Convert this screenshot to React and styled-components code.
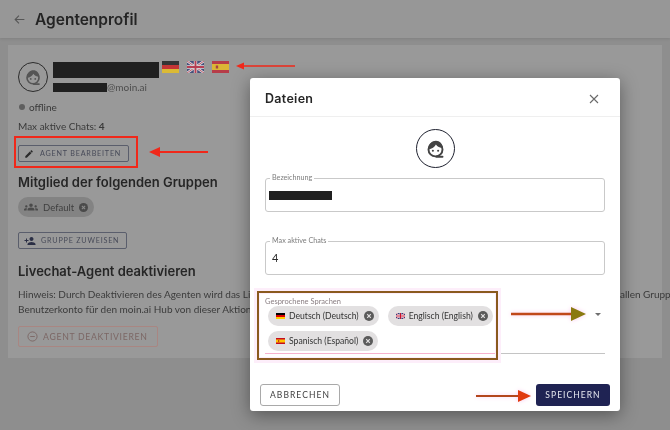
import React from 'react';
import styled, { createGlobalStyle } from 'styled-components';

const GlobalStyle = createGlobalStyle`
  html, body {
    margin: 0;
    padding: 0;
    background: #8e8e8e;
  }
  * {
    box-sizing: border-box;
  }
`;

const headingFont = `Inter, "Open Sans", sans-serif`;
const bodyFont = `Lato, "Open Sans", sans-serif`;

const Page = styled.div`
  position: relative;
  width: 670px;
  height: 430px;
  overflow: hidden;
  background: #8e8e8e;
  font-family: ${bodyFont};
  color: #2a2a2a;
  filter: blur(0.3px);
`;

const Header = styled.header`
  display: flex;
  align-items: center;
  gap: 9px;
  height: 38px;
  padding-left: 13px;
  background: #979797;
  box-shadow: 0 1px 3px rgba(0, 0, 0, 0.1);
`;

const BackIcon = styled.svg`
  width: 13px;
  height: 13px;
  color: #565656;
`;

const PageTitle = styled.h1`
  margin: 0;
  font-family: ${headingFont};
  font-size: 15.5px;
  font-weight: 600;
  color: #242424;
`;

const Card = styled.section`
  margin: 7px 8px 0;
  height: 313px;
  padding: 17px 10px 0;
  background: #999;
`;

const ProfileRow = styled.div`
  display: flex;
  gap: 5px;
`;

const AvatarCircle = styled.div`
  display: flex;
  align-items: center;
  justify-content: center;
  flex: none;
  width: ${(p) => p.$size}px;
  height: ${(p) => p.$size}px;
  border: 1.2px solid ${(p) => p.$line};
  border-radius: 50%;
`;

const Identity = styled.div`
  display: flex;
  flex-direction: column;
`;

const NameRow = styled.div`
  display: flex;
  gap: 3px;
`;

const Redacted = styled.div`
  width: ${(p) => p.$w}px;
  height: ${(p) => p.$h}px;
  background: #202020;
`;

const FlagBox = styled.svg`
  display: block;
  width: ${(p) => p.$w}px;
  height: ${(p) => p.$h}px;
  opacity: ${(p) => p.$fade || 0.65};
`;

const FlagList = styled.div`
  display: flex;
  gap: 8px;
  margin-top: -1px;
`;

const EmailRow = styled.div`
  display: flex;
  align-items: center;
  height: 10px;
  margin-top: 4px;
  font-size: 10px;
  color: #4d4d4d;
`;

const StatusRow = styled.div`
  display: flex;
  align-items: center;
  gap: 4px;
  margin: 8px 0 0 1px;
  font-size: 10px;
  line-height: 14px;
  color: #3a3a3a;
`;

const StatusDot = styled.span`
  width: 6px;
  height: 6px;
  border-radius: 50%;
  background: #5f5f5f;
`;

const ChatsLine = styled.p`
  margin: 5px 0 0;
  font-size: 10px;
  line-height: 14px;
  color: #3a3a3a;
  b {
    font-weight: 700;
  }
`;

const OutlineButton = styled.button`
  display: flex;
  align-items: center;
  gap: ${(p) => p.$gap || 6}px;
  width: ${(p) => p.$w}px;
  height: 17px;
  margin-top: ${(p) => p.$top}px;
  padding: 0 0 0 5px;
  background: transparent;
  border: 1px solid #5a5e6c;
  border-radius: 2px;
  font-family: ${bodyFont};
  font-size: 7.2px;
  letter-spacing: 0.8px;
  color: #474a58;
  white-space: nowrap;
`;

const SectionHeading = styled.h2`
  margin: ${(p) => p.$top}px 0 0;
  font-family: ${headingFont};
  font-size: 13px;
  line-height: 18px;
  font-weight: 600;
  color: #262626;
  white-space: nowrap;
`;

const GroupChip = styled.div`
  display: flex;
  align-items: center;
  gap: 5px;
  width: 76px;
  height: 20px;
  margin-top: 6px;
  padding-left: 6px;
  border-radius: 10px;
  background: #838383;
  font-size: 9.5px;
  color: #3f3f3f;
`;

const Hint = styled.p`
  margin: 7px 0 0;
  font-size: 10px;
  line-height: 14.5px;
  color: #3b3b3b;
  white-space: nowrap;
`;

const DangerButton = styled.button`
  display: flex;
  align-items: center;
  gap: 5px;
  width: 140px;
  height: 21px;
  margin-top: 10px;
  padding: 0 0 0 8px;
  background: transparent;
  border: 1px solid #a98682;
  border-radius: 2px;
  font-family: ${bodyFont};
  font-size: 8.7px;
  letter-spacing: 0.7px;
  color: #7c6765;
  white-space: nowrap;
`;

const Backdrop = styled.div`
  position: absolute;
  left: 250px;
  top: 78px;
`;

const Modal = styled.div`
  display: flex;
  flex-direction: column;
  width: 370px;
  height: 333px;
  background: #fff;
  border-radius: 3px;
  box-shadow: 0 4px 18px rgba(0, 0, 0, 0.4);
`;

const ModalHead = styled.div`
  display: flex;
  align-items: center;
  justify-content: space-between;
  height: 39px;
  padding: 3px 20px 0 15px;
  border-bottom: 1px solid #efefef;
`;

const ModalTitle = styled.h2`
  margin: 0;
  font-family: ${headingFont};
  font-size: 12.5px;
  font-weight: 600;
  letter-spacing: 0.3px;
  color: #262626;
`;

const CloseIcon = styled.svg`
  width: 12px;
  height: 12px;
  color: #6a6a6a;
`;

const ModalBody = styled.div`
  display: flex;
  flex-direction: column;
  flex: 1;
  padding: 12px 15px 0;
`;

const AvatarSlot = styled.div`
  display: flex;
  justify-content: center;
`;

const Field = styled.fieldset`
  display: flex;
  align-items: flex-start;
  height: 38px;
  margin: ${(p) => p.$top}px 0 0;
  padding: 0 6px;
  border: 1px solid #c9c9c9;
  border-radius: 3px;
  min-width: 0;
`;

const FieldLegend = styled.legend`
  padding: 0 2px;
  margin-left: -2px;
  font-size: 7.2px;
  line-height: 8px;
  color: #7d7d7d;
`;

const FieldValue = styled.span`
  margin-top: 6px;
  font-size: 11px;
  color: #2a2a2a;
`;

const FieldBar = styled(Redacted)`
  margin: 9px 0 0 -3px;
`;

const SelectField = styled.div`
  position: relative;
  height: 57px;
  margin-top: 22px;
  border-bottom: 1px solid;
  border-image: linear-gradient(90deg, #f7b2cf 68%, #c4c4c4 68%) 1;
`;

const SelectLabel = styled.div`
  font-size: 7.5px;
  line-height: 9px;
  color: #8a7f83;
`;

const ChipWrap = styled.div`
  display: flex;
  flex-wrap: wrap;
  gap: 5px 9px;
  margin: 0 0 0 3px;
  width: 240px;
`;

const LangChip = styled.div`
  display: flex;
  align-items: center;
  height: 20px;
  padding: 0 5px 0 8px;
  gap: 4px;
  border-radius: 10px;
  background: #e2e0e1;
  font-size: 8.6px;
  color: #333;
  white-space: nowrap;
`;

const ChipText = styled.span`
  margin-right: 1px;
`;

const DropCaret = styled.span`
  position: absolute;
  right: 4px;
  top: 16px;
  width: 0;
  height: 0;
  border-left: 3px solid transparent;
  border-right: 3px solid transparent;
  border-top: 3px solid #6f6f6f;
`;

const ModalFoot = styled.div`
  display: flex;
  align-items: center;
  justify-content: space-between;
  margin-top: auto;
  padding: 0 10px 5px;
`;

const CancelButton = styled.button`
  width: 80px;
  height: 22px;
  background: #fff;
  border: 1px solid #a9a9a9;
  border-radius: 3px;
  font-family: ${bodyFont};
  font-size: 8.5px;
  letter-spacing: 1.05px;
  color: #3d3d3d;
`;

const SaveButton = styled.button`
  width: 74px;
  height: 22px;
  background: #1f2353;
  border: 0;
  border-radius: 3px;
  font-family: ${bodyFont};
  font-size: 8.5px;
  letter-spacing: 1.05px;
  color: #e6e7ef;
`;

// the red marks somebody drew on top of the screenshot
const MarkBox = styled.div`
  position: absolute;
  left: ${(p) => p.$x}px;
  top: ${(p) => p.$y}px;
  width: ${(p) => p.$w}px;
  height: ${(p) => p.$h}px;
  border: 2px solid ${(p) => p.$color};
  pointer-events: none;
  ${(p) => p.$glow && 'box-shadow: 0 0 0 3px #fdeefa, inset 0 0 0 1px #fdeefa;'}
`;

const ArrowSvg = styled.svg`
  position: absolute;
  left: ${(p) => p.$x}px;
  top: ${(p) => p.$y - 8}px;
  width: ${(p) => p.$len}px;
  height: 16px;
  ${(p) => p.$glow && 'filter: drop-shadow(0 0 2px #fbc9ee);'}
`;

const Arrow = ({ x, y, len, dir, color = '#f0281a', head = color, size = 7, weight = 1.5, glow }) => (
  <ArrowSvg $x={x} $y={y} $len={len} $glow={glow} viewBox={`0 0 ${len} 16`}>
    {dir === 'left' ? (
      <>
        <rect x={size} y={8 - weight / 2} width={len - size} height={weight} fill={color} />
        <polygon points={`0,8 ${size + 1},${8 - size / 2} ${size + 1},${8 + size / 2}`} fill={head} />
      </>
    ) : (
      <>
        <rect x="0" y={8 - weight / 2} width={len - size} height={weight} fill={color} />
        <polygon points={`${len},8 ${len - size - 1},${8 - size / 2} ${len - size - 1},${8 + size / 2}`} fill={head} />
      </>
    )}
  </ArrowSvg>
);

const AgentFace = ({ size, color }) => (
  <svg width={size} height={size} viewBox="0 0 24 24" fill="none">
    <circle cx="12" cy="13" r="8" stroke={color} strokeWidth="2.2" />
    <path d="M4 13C4 6.5 8 3 12.5 3S20 6.5 20.5 11.5C17 11.5 14 10 12.5 7.5 11 10.5 8 12.5 4 13z" fill={color} />
    <circle cx="9" cy="14.5" r="1.2" fill={color} />
    <circle cx="15" cy="14.5" r="1.2" fill={color} />
    <path d="M13 21.5h7" stroke={color} strokeWidth="2.2" strokeLinecap="round" />
  </svg>
);

const ChipClose = ({ size = 10, bg, fg }) => (
  <svg width={size} height={size} viewBox="0 0 10 10">
    <circle cx="5" cy="5" r="5" fill={bg} />
    <path d="M3.2 3.2l3.6 3.6M6.8 3.2L3.2 6.8" stroke={fg} strokeWidth="1.2" />
  </svg>
);

const FlagDe = ({ w, h, fade }) => (
  <FlagBox $w={w} $h={h} $fade={fade} viewBox="0 0 18 12" preserveAspectRatio="none">
    <rect width="18" height="4" fill="#000" />
    <rect y="4" width="18" height="4" fill="#d00" />
    <rect y="8" width="18" height="4" fill="#fc0" />
  </FlagBox>
);

const FlagGb = ({ w, h, fade }) => (
  <FlagBox $w={w} $h={h} $fade={fade} viewBox="0 0 18 12" preserveAspectRatio="none">
    <rect width="18" height="12" fill="#1a2a6c" />
    <path d="M0 0l18 12M18 0L0 12" stroke="#fff" strokeWidth="2.4" />
    <path d="M0 0l18 12M18 0L0 12" stroke="#c8102e" strokeWidth="0.8" />
    <path d="M9 0v12M0 6h18" stroke="#fff" strokeWidth="3.6" />
    <path d="M9 0v12M0 6h18" stroke="#c8102e" strokeWidth="2" />
  </FlagBox>
);

const FlagEs = ({ w, h, fade }) => (
  <FlagBox $w={w} $h={h} $fade={fade} viewBox="0 0 18 12" preserveAspectRatio="none">
    <rect width="18" height="12" fill="#c60b1e" />
    <rect y="3" width="18" height="6" fill="#ffc400" />
    <rect x="4" y="4.5" width="2.5" height="3" fill="#ad1519" />
  </FlagBox>
);

const PencilIcon = () => (
  <svg width="10" height="10" viewBox="0 0 24 24" fill="#2b2b2b">
    <path d="M3 17.25V21h3.75L17.81 9.94l-3.75-3.75L3 17.25zM20.71 7.04a1 1 0 0 0 0-1.41l-2.34-2.34a1 1 0 0 0-1.41 0l-1.83 1.83 3.75 3.75 1.83-1.83z" />
  </svg>
);

const GroupIcon = () => (
  <svg width="14" height="14" viewBox="0 0 24 24" fill="#4a4a4a">
    <path d="M12 12.75c1.63 0 3.07.39 4.24.9 1.08.48 1.76 1.56 1.76 2.73V18H6v-1.61c0-1.18.68-2.26 1.76-2.73 1.17-.52 2.61-.91 4.24-.91zM4 13c1.1 0 2-.9 2-2s-.9-2-2-2-2 .9-2 2 .9 2 2 2zm1.13 1.1C4.76 14.04 4.39 14 4 14c-.99 0-1.93.21-2.78.58A2.01 2.01 0 0 0 0 16.43V18h4.5v-1.61c0-.83.23-1.61.63-2.29zM20 13c1.1 0 2-.9 2-2s-.9-2-2-2-2 .9-2 2 .9 2 2 2zm4 3.43c0-.81-.48-1.53-1.22-1.85A6.95 6.95 0 0 0 20 14c-.39 0-.76.04-1.13.1.4.68.63 1.46.63 2.29V18H24v-1.57zM12 6c1.66 0 3 1.34 3 3s-1.34 3-3 3-3-1.34-3-3 1.34-3 3-3z" />
  </svg>
);

const AddPersonIcon = () => (
  <svg width="12" height="12" viewBox="0 0 24 24" fill="#2b2f45">
    <path d="M15 12c2.21 0 4-1.79 4-4s-1.79-4-4-4-4 1.79-4 4 1.79 4 4 4zm-9-2V7H4v3H1v2h3v3h2v-3h3v-2H6zm9 4c-2.67 0-8 1.34-8 4v2h16v-2c0-2.66-5.33-4-8-4z" />
  </svg>
);

const MinusCircle = () => (
  <svg width="11" height="11" viewBox="0 0 12 12" fill="none" stroke="#7c6765" strokeWidth="1">
    <circle cx="6" cy="6" r="5" />
    <path d="M3.5 6h5" />
  </svg>
);

const languages = [
  { name: 'Deutsch (Deutsch)', Flag: FlagDe },
  { name: 'Englisch (English)', Flag: FlagGb },
  { name: 'Spanisch (Español)', Flag: FlagEs },
];

export default function App() {
  return (
    <Page>
      <GlobalStyle />
      <Header>
        <BackIcon viewBox="0 0 24 24" fill="none" stroke="currentColor" strokeWidth="2">
          <path d="M21 12H4M11 5l-7 7 7 7" />
        </BackIcon>
        <PageTitle>Agentenprofil</PageTitle>
      </Header>

      <Card>
        <ProfileRow>
          <AvatarCircle $size={30} $line="#2c2c2c">
            <AgentFace size={18} color="#555" />
          </AvatarCircle>
          <Identity>
            <NameRow>
              <Redacted $w={106} $h={16} />
              <FlagList>
                <FlagDe w={17} h={12} />
                <FlagGb w={17} h={12} />
                <FlagEs w={17} h={12} />
              </FlagList>
            </NameRow>
            <EmailRow>
              <Redacted $w={54} $h={9} />
              @moin.ai
            </EmailRow>
          </Identity>
        </ProfileRow>

        <StatusRow>
          <StatusDot />
          offline
        </StatusRow>
        <ChatsLine>
          Max aktive Chats: <b>4</b>
        </ChatsLine>

        <OutlineButton $w={111} $top={12}>
          <PencilIcon />
          AGENT BEARBEITEN
        </OutlineButton>

        <SectionHeading $top={11}>Mitglied der folgenden Gruppen</SectionHeading>
        <GroupChip>
          <GroupIcon />
          Default
          <ChipClose size={9} bg="#4a4a4a" fg="#8a8a8a" />
        </GroupChip>

        <OutlineButton $w={109} $top={15} $gap={5}>
          <AddPersonIcon />
          GRUPPE ZUWEISEN
        </OutlineButton>

        <SectionHeading $top={13}>Livechat-Agent deaktivieren</SectionHeading>
        <Hint>
          Hinweis: Durch Deaktivieren des Agenten wird das Livechat-Konto deaktiviert, der Agent ist nicht mehr verfügbar und wird dauerhaft aus allen Gruppen entfernt.
          <br />
          Benutzerkonto für den moin.ai Hub von dieser Aktion nicht betroffen.
        </Hint>
        <DangerButton>
          <MinusCircle />
          AGENT DEAKTIVIEREN
        </DangerButton>
      </Card>

      <Backdrop>
        <Modal>
          <ModalHead>
            <ModalTitle>Dateien</ModalTitle>
            <CloseIcon viewBox="0 0 12 12" fill="none" stroke="currentColor" strokeWidth="1.1">
              <path d="M2 2l8 8M10 2l-8 8" />
            </CloseIcon>
          </ModalHead>
          <ModalBody>
            <AvatarSlot>
              <AvatarCircle $size={39} $line="#1f2230">
                <AgentFace size={21} color="#444" />
              </AvatarCircle>
            </AvatarSlot>

            <Field $top={6}>
              <FieldLegend>Bezeichnung</FieldLegend>
              <FieldBar $w={63} $h={9} />
            </Field>

            <Field $top={25}>
              <FieldLegend>Max aktive Chats</FieldLegend>
              <FieldValue>4</FieldValue>
            </Field>

            <SelectField>
              <SelectLabel>Gesprochene Sprachen</SelectLabel>
              <ChipWrap>
                {languages.map(({ name, Flag }) => (
                  <LangChip key={name}>
                    <Flag w={9} h={6} fade={1} />
                    <ChipText>{name}</ChipText>
                    <ChipClose bg="#5b5b5b" fg="#e2e0e1" />
                  </LangChip>
                ))}
              </ChipWrap>
              <DropCaret />
            </SelectField>
          </ModalBody>
          <ModalFoot>
            <CancelButton>ABBRECHEN</CancelButton>
            <SaveButton>SPEICHERN</SaveButton>
          </ModalFoot>
        </Modal>
      </Backdrop>

      <MarkBox $x={14} $y={136} $w={124} $h={32} $color="#f0281a" />
      <MarkBox $x={257} $y={291} $w={241} $h={69} $color="#8a5a1e" $glow />
      <Arrow x={236} y={66} len={59} dir="left" />
      <Arrow x={149} y={152} len={59} dir="left" size={10} weight={2} />
      <Arrow x={511} y={314} len={75} dir="right" size={14} weight={2.5} color="#c0481a" head="#8a7a10" glow />
      <Arrow x={476} y={396} len={55} dir="right" size={12} weight={2} color="#b3461c" head="#e03a10" glow />
    </Page>
  );
}
